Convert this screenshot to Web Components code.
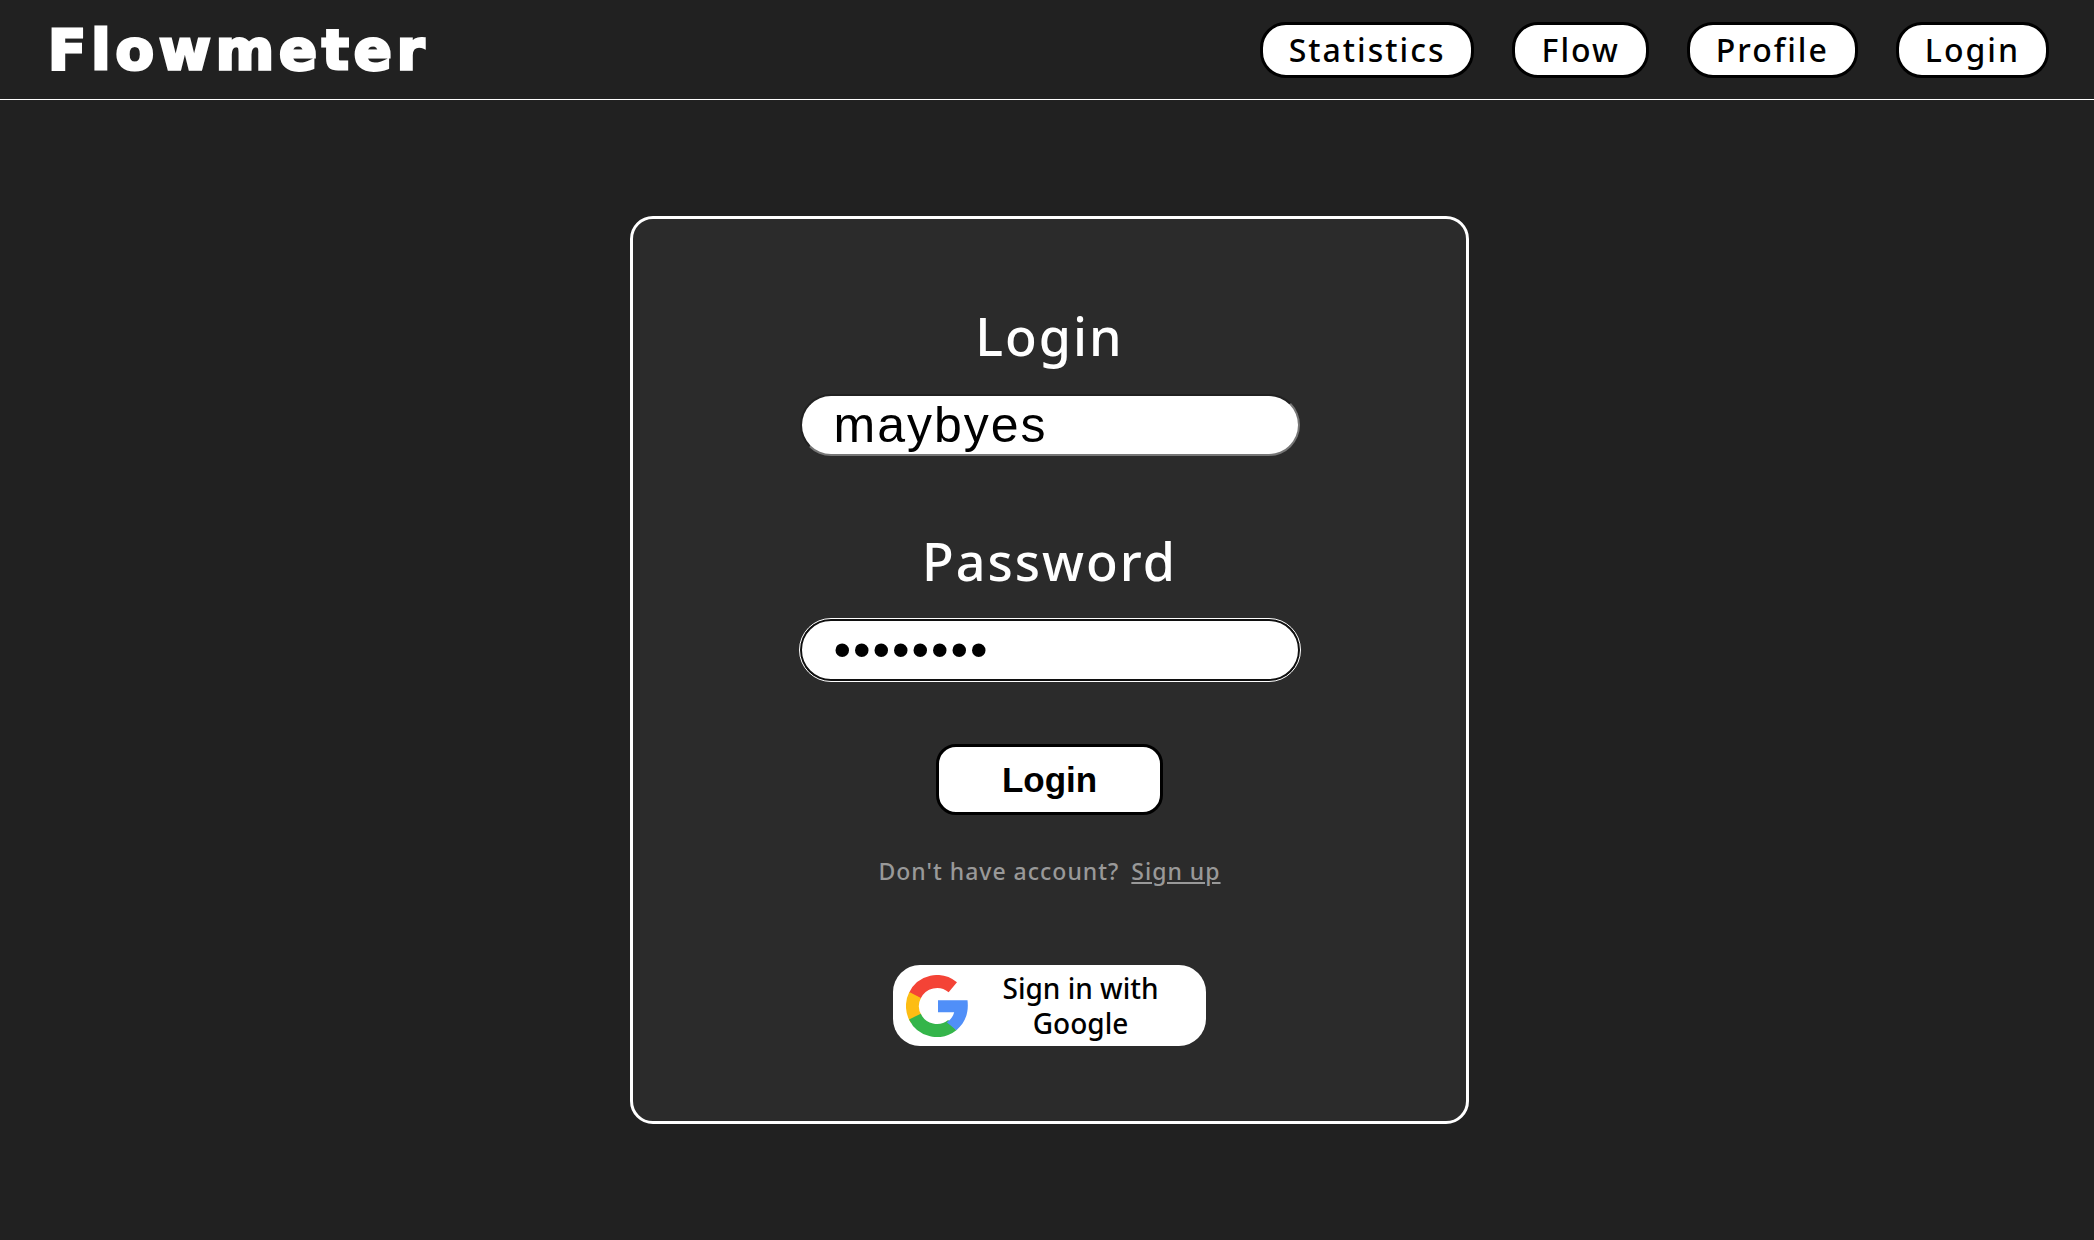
<!DOCTYPE html>
<html lang="en">
<head>
<meta charset="utf-8">
<title>Flowmeter</title>
<style>
  :root { --ui: "Noto Sans", "Open Sans", sans-serif; --plain: "Liberation Sans", Arial, sans-serif; }
  body { margin: 0; min-height: 100vh; background: #212121; color: #fff; font-family: var(--ui); font-weight: 500; }
</style>
</head>
<body>
<site-header>
  <nav-pill href="#statistics">Statistics</nav-pill>
  <nav-pill href="#flow">Flow</nav-pill>
  <nav-pill href="#profile">Profile</nav-pill>
  <nav-pill href="#login">Login</nav-pill>
</site-header>
<login-page></login-page>

<script>
  class BaseElement extends HTMLElement {
    connectedCallback() {
      if (!this.shadowRoot) this.attachShadow({ mode: "open" }).innerHTML = this.render();
    }
    attr(name) { return this.getAttribute(name) || ""; }
  }

  customElements.define("nav-pill", class extends BaseElement {
    render() {
      return `<style>
        :host { display: block; }
        a { display: block; box-sizing: border-box; padding: 0 26px; border: 3px solid #000; border-radius: 26px;
            background: #fff; color: #000; font-size: 32px; line-height: 50px; letter-spacing: 2px;
            text-decoration: none; white-space: nowrap; }
      </style><a href="${this.attr("href")}"><slot></slot></a>`;
    }
  });

  customElements.define("site-header", class extends BaseElement {
    render() {
      return `<style>
        :host { display: block; }
        header { display: flex; align-items: center; justify-content: space-between; box-sizing: border-box;
                 height: 100px; padding: 0 45px 0 48px; border-bottom: 1px solid #fff; }
        .brand { font: 700 56px/96px "DejaVu Sans", sans-serif; letter-spacing: 5px; -webkit-text-stroke: 3px #fff;
                 color: #fff; text-decoration: none; }
        nav { display: flex; gap: 38px; }
      </style><header><a class="brand" href="#home">Flowmeter</a><nav><slot></slot></nav></header>`;
    }
  });

  customElements.define("form-field", class extends BaseElement {
    render() {
      return `<style>
        :host { display: flex; flex-direction: column; align-items: center; gap: 20px; width: 100%; }
        label { font-size: 52px; line-height: 76px; letter-spacing: 2px; }
        input { box-sizing: border-box; width: 100%; height: 62px; margin: 0; padding: 0 32px;
                border: 2px inset #767676; border-radius: 31px; background: #fff; color: #000;
                font: 400 50px var(--plain); letter-spacing: 2px; outline: none; }
        :host([active]) input { border: 2px solid #101010; outline: 1px solid #fff; }
      </style>
      <label for="field">${this.attr("label")}</label>
      <input id="field" type="${this.attr("type")}" value="${this.attr("value")}">`;
    }
  });

  customElements.define("google-button", class extends BaseElement {
    render() {
      return `<style>
        :host { display: block; }
        button { display: flex; align-items: center; box-sizing: border-box; width: 313px; height: 81px; padding: 0 13px;
                 border: 0; border-radius: 27px; background: #fff; color: #000; font: 500 28px/35px var(--ui); }
        svg { flex: none; width: 62px; height: 62px; }
        span { flex: 1; padding: 0 20px; }
      </style>
      <button type="button">
        <svg viewBox="0 0 62 62" aria-hidden="true" fill="none" stroke-width="13">
          <path stroke="#f44336" d="M8.8 20.8A24.5 24.5 0 0 1 46.8 12.3"/>
          <path stroke="#fdbd13" d="M10.1 44A24.5 24.5 0 0 1 9.1 20"/>
          <path stroke="#34b54a" d="M46.3 50.2A24.5 24.5 0 0 1 8.9 41.6"/>
          <path fill="#508ff8" stroke="none" d="M32 25.3H61.5C63 38 59 48 50.4 55.2L40.7 47.3C44.5 45 47.2 41.3 48.2 37.3H32Z"/>
        </svg>
        <span><slot></slot></span>
      </button>`;
    }
  });

  customElements.define("login-page", class extends BaseElement {
    render() {
      return `<style>
        :host { display: block; }
        main { display: flex; justify-content: center; padding: 116px 0 116px 5px; }
        form { display: flex; flex-direction: column; align-items: center; box-sizing: border-box; width: calc(40vw + 2px); min-width: 560px;
               padding: 79px 20px 75px; border: 3px solid #fff; border-radius: 23px; background: #2b2b2b; }
        .fields { display: flex; flex-direction: column; gap: 67px; width: 500px; }
        .submit { box-sizing: border-box; width: 227px; height: 71px; margin-top: 63px; border: 3px solid #000; border-radius: 20px;
                  background: #fff; color: #000; font: 700 35px var(--plain); }
        p { display: flex; gap: 12px; margin: 38px 0 76px; color: #999; font-size: 23px; line-height: 36px; letter-spacing: 1px; }
        p a { color: inherit; }
      </style>
      <main><form>
        <div class="fields">
          <form-field label="Login" type="text" value="maybyes"></form-field>
          <form-field label="Password" type="password" value="password" active></form-field>
        </div>
        <button class="submit" type="button">Login</button>
        <p><span>Don't have account?</span><a href="#signup">Sign up</a></p>
        <google-button>Sign in with Google</google-button>
      </form></main>`;
    }
  });
</script>
</body>
</html>
